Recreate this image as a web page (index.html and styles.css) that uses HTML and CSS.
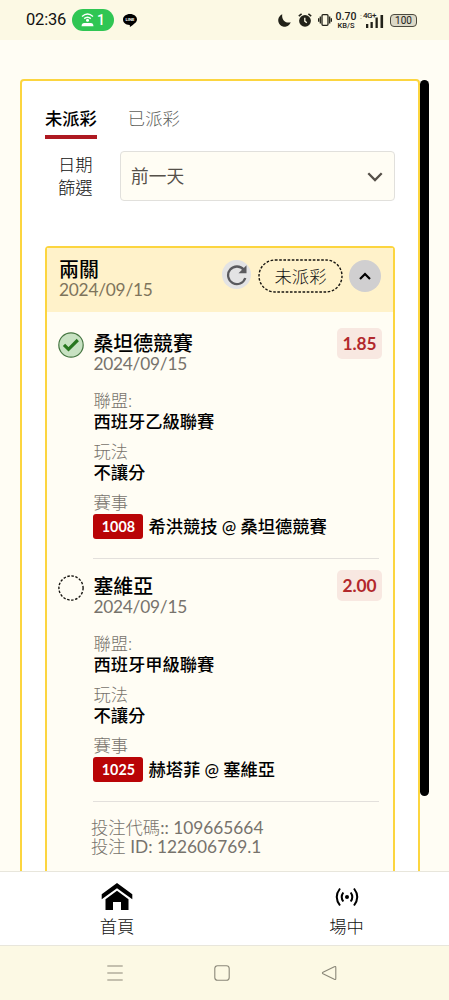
FILE: index.html
```html
<!DOCTYPE html>
<html lang="zh-Hant">
<head>
<meta charset="utf-8">
<meta name="viewport" content="width=device-width">
<title>投注</title>
<link rel="stylesheet" href="styles.css">
</head>
<body>
<header class="status">
  <span class="clock">02:36</span>
  <span class="hotspot">
    <svg width="13" height="14" viewBox="0 0 13 14" fill="none" stroke="#fff" stroke-width="1.4"><path d="M1 3.6Q6.5-1.4 12 3.6M3.2 5.6q3.3-2.8 6.6 0"/><circle cx="6.5" cy="7.3" r="1.5" fill="#fff" stroke="none"/><path d="M.5 13.2q.3-3.2 2.700-3.200h6.600q2.400 0 2.700 3.200z" fill="#fff" stroke="none"/></svg>
    <b>1</b>
  </span>
  <span class="chat"><svg width="14" height="13" viewBox="0 0 14 13"><path d="M7 0c3.900 0 7 2.400 7 5.600 0 2.900-4.400 5.600-7 7.400-.4-.3.300-1.800-.5-1.900C2.600 10.800 0 8.700 0 5.600 0 2.400 3.100 0 7 0z"/></svg><i>LINE</i></span>
  <span class="sys-icons">
    <svg class="moon" width="13" height="13" viewBox="0 0 13 13"><path d="M4.300.3C3.200 5.500 7.500 9.800 12.700 8.300A6.400 6.400 0 1 1 4.300.3z"/></svg>
    <svg class="alarm" width="14" height="14" viewBox="0 0 14 14"><circle cx="7" cy="7.800" r="5.900"/><path d="M.8 3.200 3.600.9M13.200 3.200 10.400.9" stroke="#222219" stroke-width="1.500"/><path d="M6.800 4.800v3.300l2 1.700" stroke="#fcf9e4" stroke-width="1.300" fill="none"/></svg>
    <svg class="vibrate" width="14" height="12" viewBox="0 0 14 12" fill="none" stroke="#222219" stroke-width="1.300"><rect x="4" y=".7" width="6" height="10.600" rx="1"/><path d="M2.300 2.500v7M11.700 2.500v7M.6 4.200v3.600M13.400 4.200v3.600"/></svg>
    <span class="rate"><b>0.70</b><b class="unit">KB/S</b></span>
    <span class="signal"><b>4G+</b><svg width="24" height="15" viewBox="0 0 24 15"><path d="M6 11h2.300v4H6zM10.500 9h2.300v6h-2.300zM15.500 4.500h2.300V15h-2.300zM20.500 2h2.600v13h-2.600z"/><path d="M0 3l1-1 1 1M0 5l1 1 1-1" fill="none" stroke="#bbb8a5" stroke-width=".6"/></svg></span>
    <span class="battery">100</span>
  </span>
</header>

<main class="page">
  <section class="panel">
    <nav class="tabs"><a class="tab active">未派彩</a><a class="tab">已派彩</a></nav>
    <div class="filter">
      <label>日期<br>篩選</label>
      <div class="select"><span>前一天</span>
        <svg width="16" height="10" viewBox="0 0 16 10" fill="none" stroke="#555049" stroke-width="2.300"><path d="M1.300 1.300 8 8l6.700-6.700"/></svg>
      </div>
    </div>
    <article class="bet">
      <header class="bet-head">
        <div class="bet-title"><h2>兩關</h2><time>2024/09/15</time></div>
        <span class="refresh"><svg width="22" height="22" viewBox="0 0 22 22"><path d="M17.800 5.800A8.800 8.800 0 1 0 19.300 14" fill="none" stroke="#5a5a5e" stroke-width="2.300"/><path d="M20.500 1.200v8h-8z" fill="#5a5a5e"/></svg></span>
        <span class="pill">未派彩<svg width="85" height="34" viewBox="0 0 85 34"><rect x="1" y="1" width="83" height="32" rx="16" fill="none" stroke="#171510" stroke-width="1.400" stroke-dasharray="2.600 1.600"/></svg></span>
        <span class="collapse"><svg width="12" height="8" viewBox="0 0 12 8" fill="none" stroke="#000" stroke-width="2.200"><path d="M1 7l5-5 5 5"/></svg></span>
      </header>
      <section class="leg">
        <svg class="mark" width="26" height="26" viewBox="0 0 26 26"><circle cx="13" cy="13" r="12.200" fill="#c8e2c2" stroke="#477743" stroke-width="1.200"/><path d="M6 12.800l4.500 4.500L19.800 8" fill="none" stroke="#28771f" stroke-width="3.200"/></svg>
        <div class="info">
          <div class="leg-top"><div><h3>桑坦德競賽</h3><time>2024/09/15</time></div><span class="odds">1.85</span></div>
          <dl><dt>聯盟:</dt><dd>西班牙乙級聯賽</dd><dt>玩法</dt><dd>不讓分</dd><dt>賽事</dt><dd class="match"><span class="code">1008</span>希洪競技 @ 桑坦德競賽</dd></dl>
        </div>
      </section>
      <section class="leg next">
        <svg class="mark" width="26" height="26" viewBox="0 0 26 26"><circle cx="13" cy="13" r="12.100" fill="none" stroke="#171510" stroke-width="1.400" stroke-dasharray="2.500 1.570"/></svg>
        <div class="info">
          <div class="leg-top"><div><h3>塞維亞</h3><time>2024/09/15</time></div><span class="odds">2.00</span></div>
          <dl><dt>聯盟:</dt><dd>西班牙甲級聯賽</dd><dt>玩法</dt><dd>不讓分</dd><dt>賽事</dt><dd class="match"><span class="code">1025</span>赫塔菲 @ 塞維亞</dd></dl>
        </div>
      </section>
      <footer class="ids"><div>投注代碼<span>:: 109665664</span></div><div>投注 <span>ID: 122606769.1</span></div></footer>
    </article>
  </section>
  <div class="scrollbar"></div>
</main>

<nav class="bottom">
  <a class="home"><svg width="32" height="28" viewBox="0 0 32 28"><path d="M16 0l15.300 11.200v5L16 5.200.7 16.200v-5z"/><path d="M16 7.800l11.500 8.500V27H20v-8h-8v8H4.500V16.300z"/></svg><span>首頁</span></a>
  <a class="live"><svg width="24" height="20" viewBox="0 0 24 20" fill="none" stroke="#000" stroke-width="2"><circle cx="12" cy="10" r="2" fill="#000" stroke="none"/><path d="M8.300 5.500q-3.200 4.500 0 9M15.700 5.500q3.200 4.500 0 9M5 1.500q-6.500 8.500 0 17M19 1.500q6.500 8.500 0 17"/></svg><span>場中</span></a>
</nav>
<footer class="system">
  <svg width="16" height="16" viewBox="0 0 16 16"><path d="M.3 1h15.400M.3 8h15.400M.3 15h15.400"/></svg>
  <svg width="16" height="16" viewBox="0 0 16 16"><rect x=".8" y=".8" width="14.400" height="14.400" rx="2.800"/></svg>
  <svg width="16" height="16" viewBox="0 0 16 16"><path d="M14.800 2.500v11q0 1.500-1.500.8L2 8.700q-1.200-.7 0-1.400l11.300-5.600q1.500-.7 1.500.8z"/></svg>
</footer>
</body>
</html>
```
FILE: styles.css
```css
* { box-sizing: border-box; }
body {
  margin: 0;
  height: 1000px;
  display: flex;
  flex-direction: column;
  overflow: hidden;
  background: #fffdf4;
  color: #111;
  font: 300 17.300px/20px Lato, "Noto Sans CJK TC", sans-serif;
}
svg { display: block; flex: none; }
h2, h3, dl, dd { margin: 0; }

.status { height: 40px; flex: none; display: flex; align-items: center; padding: 0 32px 0 26px; background: #fcf9e4; }
.clock { width: 46px; font: 400 16.500px/20px Roboto, sans-serif; color: #111; letter-spacing: -.2px; }
.hotspot { display: flex; align-items: center; justify-content: space-between; width: 42px; height: 22px; padding: 0 9px; border-radius: 11px; background: #2fc653; color: #fff; font: 500 14px/22px Roboto, sans-serif; }
.hotspot b { font-weight: 500; }
.chat { position: relative; margin-left: 9px; }
.chat i { position: absolute; left: 0; top: 3px; width: 14px; text-align: center; color: #fff; font: 700 4px/6px Inter, sans-serif; }
.sys-icons { margin-left: auto; display: flex; align-items: center; fill: #222219; color: #222219; }
.moon { margin-right: 7px; }
.alarm { margin-right: 6px; }
.vibrate { margin-right: 3px; }
.rate { width: 22px; margin-right: 3px; display: flex; flex-direction: column; align-items: center; }
.rate b { display: block; font: 500 10.500px/13px Roboto, sans-serif; margin-bottom: -1px; }
.rate .unit { font-size: 7.500px; line-height: 8px; margin: 0; }
.signal { position: relative; margin-right: 6px; }
.signal b { position: absolute; left: 3px; top: -1px; font: 500 8px/8px Roboto, sans-serif; letter-spacing: -.5px; }
.battery { width: 27px; height: 13px; border: 1px solid #4b493e; border-radius: 4px; background: #dcd9c7; text-align: center; font: 400 10px/11px Roboto, sans-serif; }

.page { position: relative; height: 831px; flex: none; overflow: hidden; padding: 39px 29px 0 20px; }
.panel { height: 820px; border: 2px solid #fcd53f; border-radius: 4px 4px 0 0; background: #fff; padding: 25px 23px 0; }
.scrollbar { position: absolute; left: 420px; top: 40px; width: 9px; height: 716px; border-radius: 4.500px; background: #000; }

.tabs { display: flex; gap: 31px; height: 33px; }
.tab { height: 33px; line-height: 26px; color: #605f5c; }
.tab.active { color: #000; font-weight: 500; border-bottom: 4px solid #ae1921; }
.filter { display: flex; align-items: center; height: 50px; margin-top: 12px; }
.filter label { width: 75px; padding-left: 13px; line-height: 23px; color: #111; }
.select { flex: 1; height: 50px; display: flex; align-items: center; justify-content: space-between; padding: 2px 11px 0 10px; border: 1px solid #e1e0dc; border-radius: 4px; background: #fffdf4; color: #555049; font-weight: 400; font-size: 17.700px; }

.bet { height: 640px; margin-top: 45px; border: 2px solid #fcd53f; border-radius: 4px 4px 0 0; background: #fffdf4; }
.bet-head { height: 64px; display: flex; align-items: flex-start; padding: 10px 11px 0 12px; background: #fff2ca; }
.bet-title { width: 163px; }
h2, h3 { font-size: 19.900px; line-height: 22px; font-weight: 500; color: #000; }
time { display: block; line-height: 19px; font-weight: 400; color: #77736c; font-size: 17.300px; letter-spacing: -.22px; }
.bet-title time { color: #7e745c; }
.refresh { width: 29px; height: 29px; margin: 2px 7px 0 0; border-radius: 50%; background: #e3e3e4; display: grid; place-items: center; }
.pill { position: relative; width: 85px; height: 34px; margin-top: 1px; text-align: center; line-height: 35px; }
.pill svg { position: absolute; left: 0; top: 0; }
.collapse { width: 32px; height: 32px; margin: 2px 0 0 6px; border-radius: 50%; background: #d0cfd0; display: grid; place-items: center; }

.leg { display: flex; align-items: flex-start; height: 248px; padding: 20px 11px 0 11px; }
.leg.next { height: 242px; padding-top: 15px; }
.mark { width: 26px; margin: 0 9.400px 0 0; }
.info { flex: 1; }
.leg-top { display: flex; justify-content: space-between; height: 41px; }
.odds { width: 45px; height: 31px; margin-top: -4px; border-radius: 5px; background: #f8e8e1; color: #b2282c; text-align: center; font-weight: 700; font-size: 17.300px; line-height: 31px; }
.next .odds { margin-top: -5px; }
dl { margin: 18px 3px 0 0; border-bottom: 1px solid #e3e0dc; height: 168px; }
dt { line-height: 20px; color: #77736c; }
dd { line-height: 21px; margin-bottom: 10px; font-weight: 500; color: #000; }
.match { display: flex; align-items: center; height: 25px; margin: 1px 0 0; line-height: 25px; white-space: pre; letter-spacing: -.03px; }
.code { width: 50px; height: 25px; margin-right: 5px; border-radius: 3px; background: #b90406; color: #fff; text-align: center; font-weight: 700; font-size: 14.300px; }
.ids { padding: 16px 0 0 44px; line-height: 19px; color: #77736c; }
.ids span { font-weight: 400; }

.bottom { height: 75px; flex: none; display: flex; border: solid #e8e6dc; border-width: 1px 0; background: #fff; }
.bottom a { flex: none; display: flex; flex-direction: column; align-items: center; }
.home { width: 234px; padding-top: 11px; }
.live { width: 225px; padding-top: 15px; }
.home span { margin-top: 6px; }
.live span { margin-top: 10px; }
.system { flex: 1; display: flex; justify-content: space-between; align-items: center; padding: 0 112px 0 107px; background: #fcf9e4; fill: none; stroke: #8b8879; stroke-width: 1.100; }
```
